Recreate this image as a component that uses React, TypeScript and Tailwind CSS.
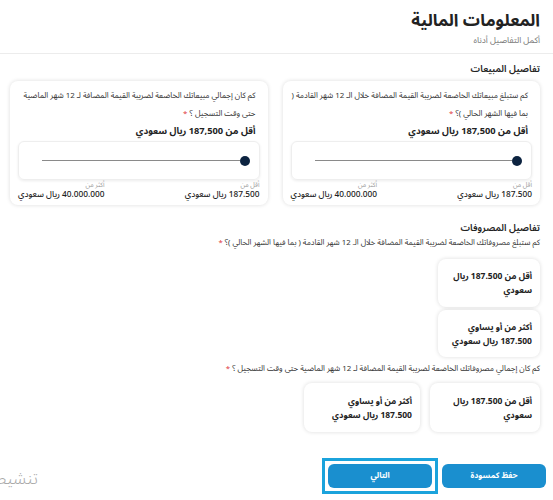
import React from "react";

const FONT = "font-['Noto_Sans_Arabic','DejaVu_Sans',sans-serif]";

type SliderCardProps = {
  line1: string;
  line2: string;
};

function SliderCard({ line1, line2 }: SliderCardProps) {
  return (
    <div className="rounded-lg bg-white px-[8px] pb-[5px] pt-[6px] shadow-[0_0_4px_rgba(0,0,0,0.14)]">
      <p className="whitespace-nowrap px-[4px] text-[7.9px] leading-[18px] text-[#333]">
        {line1}
        <br />
        {line2} <span className="text-[#e0393e]">*</span>
      </p>
      <p className="mt-[1px] whitespace-nowrap px-[4px] text-[9.3px] font-bold leading-[14px] text-[#222]">
        أقل من 187,500 ريال سعودي
      </p>
      <div className="mt-[3px] flex h-[39px] items-center rounded-md border border-[#eeeeee] px-[9px] shadow-[0_1px_3px_rgba(0,0,0,0.08)]">
        <span className="h-[10px] w-[10px] shrink-0 rounded-full bg-[#0c2340]" />
        <span className="h-px flex-1 bg-[#8a8a8a]" />
        <span className="w-[14px]" />
      </div>
      <div className="mt-[1px] flex items-end justify-between">
        <div>
          <div className="text-[6.5px] leading-[9px] text-[#9a9a9a]">أقل من</div>
          <div className="whitespace-nowrap text-[8.3px] font-medium leading-[10px] text-[#222]">
            187.500 ريال سعودي
          </div>
        </div>
        <div>
          <div className="text-[6.5px] leading-[9px] text-[#9a9a9a]">أكثر من</div>
          <div className="whitespace-nowrap text-[8.3px] font-medium leading-[10px] text-[#222]">
            40.000.000 ريال سعودي
          </div>
        </div>
      </div>
    </div>
  );
}

function OptionCard({ children, className }: { children: React.ReactNode; className?: string }) {
  return (
    <div
      className={`flex items-center rounded-lg bg-white px-[8px] text-[8.5px] font-bold leading-[14px] text-[#222] shadow-[0_0_4px_rgba(0,0,0,0.14)] ${className ?? ""}`}
    >
      <div className="whitespace-nowrap">{children}</div>
    </div>
  );
}

export default function App() {
  return (
    <div dir="rtl" className={`relative h-[500px] overflow-hidden bg-white ${FONT}`}>
      <div className="pl-[10px] pr-[13px] pt-[9px]">
        <h1 className="text-[17px] font-bold leading-[24px] text-[#222]">المعلومات المالية</h1>
        <p className="mt-[1px] text-[8.5px] leading-[12px] text-[#777]">أكمل التفاصيل أدناه</p>
      </div>
      <div className="mt-[7px] h-px bg-[#ececec]" />

      <div className="pl-[10px] pr-[13px]">
        <h2 className="mt-[8px] text-[9.5px] font-semibold leading-[14px] text-[#222]">
          تفاصيل المبيعات
        </h2>
        <div className="mt-[5px] grid grid-cols-2 gap-[15px]">
          <SliderCard
            line1="كم ستبلغ مبيعاتك الخاضعة لضريبة القيمة المضافة خلال الـ 12 شهر القادمة ("
            line2="بما فيها الشهر الحالي )؟"
          />
          <SliderCard
            line1="كم كان إجمالي مبيعاتك الخاضعة لضريبة القيمة المضافة لـ 12 شهر الماضية"
            line2="حتى وقت التسجيل ؟"
          />
        </div>

        <h2 className="mt-[16px] text-[9.5px] font-semibold leading-[14px] text-[#222]">
          تفاصيل المصروفات
        </h2>
        <p className="mt-[1px] whitespace-nowrap text-[7.8px] leading-[14px] text-[#333]">
          كم ستبلغ مصروفاتك الخاضعة لضريبة القيمة المضافة خلال الـ 12 شهر القادمة ( بما فيها الشهر الحالي )؟{" "}
          <span className="text-[#e0393e]">*</span>
        </p>
        <div className="mt-[9px] flex w-[102px] flex-col gap-[3px]">
          <OptionCard className="h-[48px]">
            أقل من 187.500 ريال
            <br />
            سعودي
          </OptionCard>
          <OptionCard className="h-[47px]">
            أكثر من أو يساوي
            <br />
            187.500 ريال سعودي
          </OptionCard>
        </div>

        <p className="mt-[5px] whitespace-nowrap text-[7.9px] leading-[14px] text-[#333]">
          كم كان إجمالي مصروفاتك الخاضعة لضريبة القيمة المضافة لـ 12 شهر الماضية حتى وقت التسجيل ؟{" "}
          <span className="text-[#e0393e]">*</span>
        </p>
        <div className="mt-[7px] flex gap-[10px]">
          <OptionCard className="h-[49px] w-[110px]">
            أقل من 187.500 ريال
            <br />
            سعودي
          </OptionCard>
          <OptionCard className="h-[49px] w-[116px]">
            أكثر من أو يساوي
            <br />
            187.500 ريال سعودي
          </OptionCard>
        </div>

        <div className="-mr-[6px] mt-[26px] flex items-center gap-[4px]">
          <button className="h-[24px] w-[104px] rounded-md bg-[#1a8fcf] text-[8px] font-bold text-white">
            حفظ كمسودة
          </button>
          <div className="border-[3px] border-[#1ba3dc] p-[3px]">
            <button className="block h-[24px] w-[104px] rounded-md bg-[#1a8fcf] text-[8px] font-bold text-white">
              التالي
            </button>
          </div>
        </div>
      </div>

      <div className="absolute left-0 top-[468px] w-[38px] overflow-hidden whitespace-nowrap text-[17px] font-light leading-[22px] text-[#a8a8a8]">
        تنشيط Windows
      </div>
    </div>
  );
}
